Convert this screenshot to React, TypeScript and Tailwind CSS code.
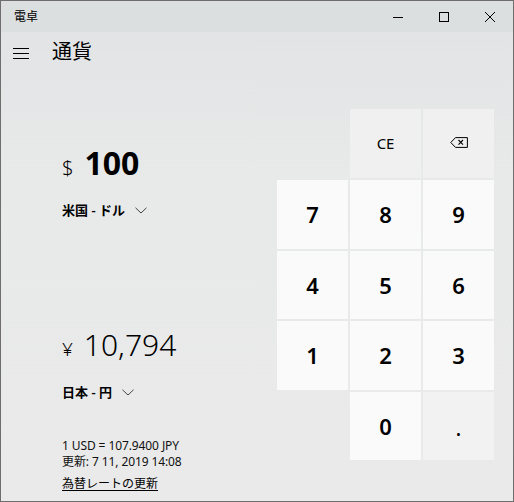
const keys: { label: string; kind: "num" | "fn" | "blank" | "back" }[] = [
  { label: "", kind: "blank" },
  { label: "CE", kind: "fn" },
  { label: "", kind: "back" },
  { label: "7", kind: "num" },
  { label: "8", kind: "num" },
  { label: "9", kind: "num" },
  { label: "4", kind: "num" },
  { label: "5", kind: "num" },
  { label: "6", kind: "num" },
  { label: "1", kind: "num" },
  { label: "2", kind: "num" },
  { label: "3", kind: "num" },
  { label: "", kind: "blank" },
  { label: "0", kind: "num" },
  { label: ".", kind: "fn" },
];

function Chevron() {
  return (
    <svg width="12" height="7" viewBox="0 0 12 7" className="ml-[10px]">
      <polyline points="0.5,0.8 6,6 11.5,0.8" fill="none" stroke="#444" strokeWidth="1" />
    </svg>
  );
}

function Key({ label, kind }: { label: string; kind: string }) {
  if (kind === "blank") return <div />;
  if (kind === "back") {
    return (
      <button className="flex items-center justify-center bg-[#f0f0f0]">
        <svg width="18" height="11" viewBox="0 0 18 11" className="-mt-[3px]">
          <path d="M0.8 5.5 L5.5 0.6 H17.4 V10.4 H5.5 Z" fill="none" stroke="#000" strokeWidth="1" />
          <path d="M8.5 3 L13 7.6 M13 3 L8.5 7.6" stroke="#000" strokeWidth="1.1" />
        </svg>
      </button>
    );
  }
  if (kind === "fn") {
    return (
      <button
        className={
          label === "CE"
            ? "flex items-center justify-center bg-[#f0f0f0] text-[15px] -tracking-[0.2px]"
            : "flex items-center justify-center bg-[#f2f2f2] text-[22px]"
        }
      >
        <span className={label === "CE" ? "-mt-[1px]" : "mt-[2px]"}>{label}</span>
      </button>
    );
  }
  return (
    <button className="flex items-center justify-center bg-[#fafafa] text-[22px] font-semibold">
      {label}
    </button>
  );
}

export default function App() {
  return (
    <div className="w-[514px] h-[502px] border border-[#6e6e6e] bg-[#e9e9e9] flex flex-col overflow-hidden text-black font-['Noto_Sans','Noto_Sans_CJK_JP',sans-serif]">
      {/* title bar */}
      <div className="h-[31px] shrink-0 flex items-center bg-[#dcdfe0]">
        <span className="pl-[13px] text-[12px] leading-none">電卓</span>
        <div className="ml-auto flex h-full">
          <button className="w-[46px] h-full flex items-center justify-center">
            <svg width="10" height="10" viewBox="0 0 10 10">
              <line x1="0" y1="5.5" x2="10" y2="5.5" stroke="#000" strokeWidth="1" />
            </svg>
          </button>
          <button className="w-[46px] h-full flex items-center justify-center">
            <svg width="10" height="10" viewBox="0 0 10 10">
              <rect x="0.5" y="0.5" width="9" height="9" fill="none" stroke="#000" strokeWidth="1" />
            </svg>
          </button>
          <button className="w-[46px] h-full flex items-center justify-center">
            <svg width="10" height="10" viewBox="0 0 10 10">
              <path d="M0 0 L10 10 M10 0 L0 10" stroke="#000" strokeWidth="1" />
            </svg>
          </button>
        </div>
      </div>

      <div className="flex-1 flex flex-col bg-gradient-to-b from-[#e2e4e5] via-[#e8e9e9] via-30% to-[#eaeaea]">
        {/* header */}
        <div className="h-[42px] shrink-0 flex items-center">
          <button className="ml-[12px] w-[16px]">
            <svg width="16" height="11" viewBox="0 0 16 11" className="block">
              <path d="M0 0.5 H16 M0 5.5 H16 M0 10.5 H16" stroke="#000" strokeWidth="1" />
            </svg>
          </button>
          <h1 className="ml-[23px] text-[20px] leading-none -mt-[2px]">通貨</h1>
        </div>

        <div className="flex flex-1">
          {/* values */}
          <div className="flex-1 flex flex-col pl-[61px]">
            <div className="mt-[73px] flex items-baseline leading-none">
              <span className="text-[20px] font-light">$</span>
              <span className="ml-[11px] text-[32px] font-bold">100</span>
            </div>
            <div className="mt-[22px] flex items-center text-[13px] font-semibold leading-[18px]">
              米国 - ドル
              <Chevron />
            </div>

            <div className="mt-[111px] flex items-baseline leading-none">
              <span className="text-[19px] font-light">¥</span>
              <span className="ml-[11px] text-[30px] font-light">10,794</span>
            </div>
            <div className="mt-[23px] flex items-center text-[13px] font-semibold leading-[18px]">
              日本 - 円
              <Chevron />
            </div>

            <div className="mt-[37px] text-[12px] leading-[16px] text-[#111] -tracking-[0.1px]">
              <p>1 USD = 107.9400 JPY</p>
              <p>更新: 7 11, 2019 14:08</p>
            </div>
            <a className="mt-[6px] self-start text-[12px] leading-[16px] underline underline-offset-2">
              為替レートの更新
            </a>
          </div>

          {/* keypad */}
          <div className="pt-[35px] pr-[19px]">
            <div className="grid grid-cols-[71px_71px_71px] grid-rows-[69px_69px_68px_69px_68px] gap-[2px]">
              {keys.map((k, i) => (
                <Key key={i} label={k.label} kind={k.kind} />
              ))}
            </div>
          </div>
        </div>
      </div>
    </div>
  );
}
